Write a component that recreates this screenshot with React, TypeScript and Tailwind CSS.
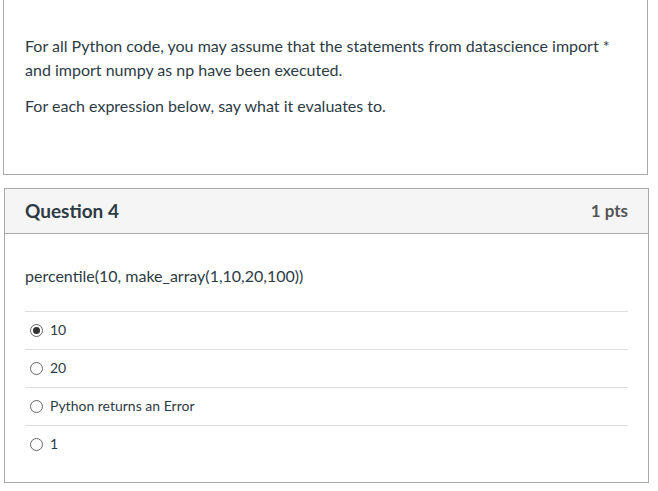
const answers = [
  { label: '10', checked: true },
  { label: '20', checked: false },
  { label: 'Python returns an Error', checked: false },
  { label: '1', checked: false },
];

function Radio({ checked }: { checked: boolean }) {
  return (
    <span className="mt-[2px] flex h-[13px] w-[13px] shrink-0 items-center justify-center rounded-full border border-[#666] bg-white">
      {checked && <span className="h-[7px] w-[7px] rounded-full bg-[#333]" />}
    </span>
  );
}

export default function App() {
  return (
    <div
      className="h-[491px] w-[658px] overflow-hidden bg-white text-[#2d3b45]"
      style={{ fontFamily: 'Lato, "Open Sans", sans-serif' }}
    >
      {/* Instructions */}
      <div className="ml-[3px] w-[645px] border border-t-0 border-[#aaa] px-[21px] pb-[56px] pt-[34px] text-[16px] leading-[24px]">
        <p>
          For all Python code, you may assume that the statements from datascience import *
          and import numpy as np have been executed.
        </p>
        <p className="mt-[12px]">For each expression below, say what it evaluates to.</p>
      </div>

      {/* Question card */}
      <div className="ml-[4px] mt-[13px] w-[645px] border border-[#aaa]">
        <div className="flex h-[45px] items-center justify-between border-b border-[#aaa] bg-[#f5f5f5] px-[20px] pb-[1px]">
          <h2 className="text-[19px] font-bold leading-none">Question 4</h2>
          <span className="text-[17px] font-bold leading-none text-[#555]">1 pts</span>
        </div>
        <div className="px-[20px] pb-[19px] pt-[30px]">
          <p className="text-[16px] leading-[24px]">percentile(10, make_array(1,10,20,100))</p>
          <div className="mt-[23px]">
            {answers.map((a) => (
              <div
                key={a.label}
                className="flex h-[38px] items-center gap-[7px] border-t border-[#ddd] pb-[3px] pl-[5px] text-[14px]"
              >
                <Radio checked={a.checked} />
                <span>{a.label}</span>
              </div>
            ))}
          </div>
        </div>
      </div>
    </div>
  );
}
